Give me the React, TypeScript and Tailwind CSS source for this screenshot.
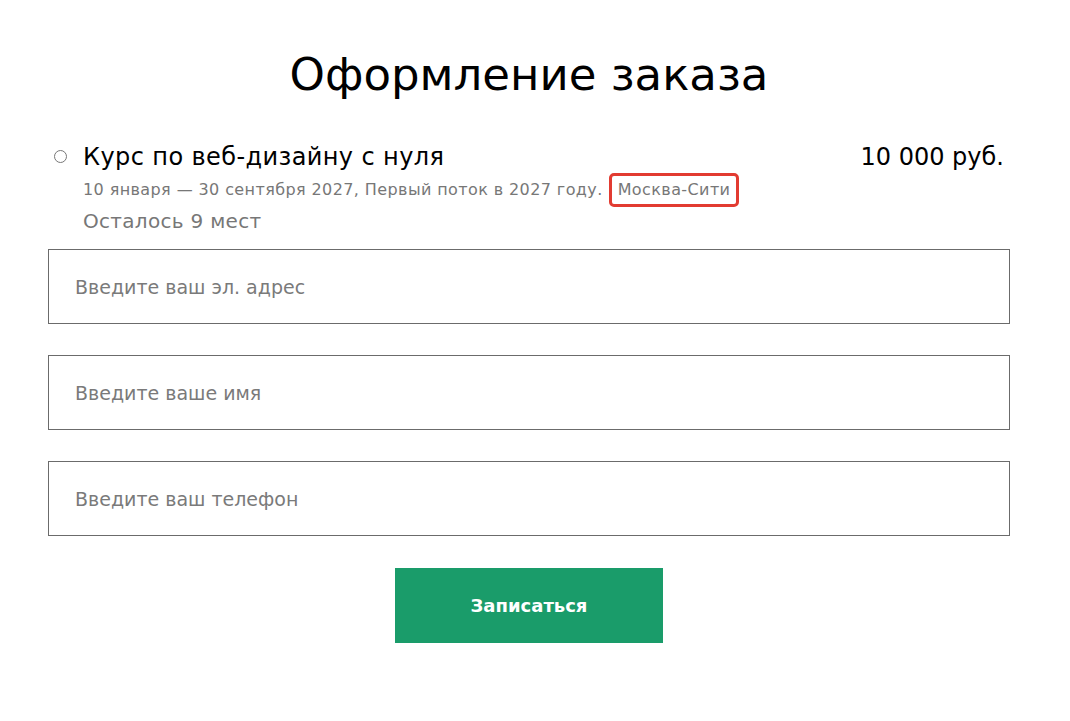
export default function App() {
  return (
    <main className="min-h-screen bg-white font-['DejaVu_Sans',sans-serif]">
      <div className="pl-[48px] pr-[60px] pt-[46px]">
        <h1 className="text-center text-[45px] leading-[58px] font-normal text-black">
          Оформление заказа
        </h1>

        <div className="mt-[38px] flex items-start">
          <div className="mt-[8px] ml-[6px] h-[13px] w-[13px] rounded-full border border-[#777]" />
          <div className="ml-[16px] flex-1">
            <div className="flex items-center justify-between pr-[6px]">
              <span className="text-[24px] leading-[30px] tracking-[0.4px] text-black">Курс по веб-дизайну с нуля</span>
              <span className="text-[24px] leading-[30px] text-black">10 000 руб.</span>
            </div>
            <div className="mt-[1px] flex items-center text-[16px] leading-[22px] tracking-[0.4px] text-[#777]">
              <span>10 января — 30 сентября 2027, Первый поток в 2027 году.</span>
              <span className="ml-[6px] rounded-[5px] border-[3px] border-[#e23b31] px-[6px] py-[3px]">
                Москва-Сити
              </span>
            </div>
            <div className="mt-[1px] text-[20px] leading-[26px] tracking-[0.3px] text-[#777]">Осталось 9 мест</div>
          </div>
        </div>

        <form className="mt-[15px] flex flex-col gap-[31px]">
          <input
            className="h-[75px] w-full border border-[#6b6b6b] px-[26px] text-[19px] text-black outline-none placeholder:text-[#7a7a7a]"
            placeholder="Введите ваш эл. адрес"
          />
          <input
            className="h-[75px] w-full border border-[#6b6b6b] px-[26px] text-[19px] text-black outline-none placeholder:text-[#7a7a7a]"
            placeholder="Введите ваше имя"
          />
          <input
            className="h-[75px] w-full border border-[#6b6b6b] px-[26px] text-[19px] text-black outline-none placeholder:text-[#7a7a7a]"
            placeholder="Введите ваш телефон"
          />
          <div className="flex justify-center pt-[1px]">
            <button
              type="button"
              className="h-[75px] w-[268px] bg-[#1a9c6a] text-[18px] font-semibold text-white"
            >
              Записаться
            </button>
          </div>
        </form>
      </div>
    </main>
  )
}
